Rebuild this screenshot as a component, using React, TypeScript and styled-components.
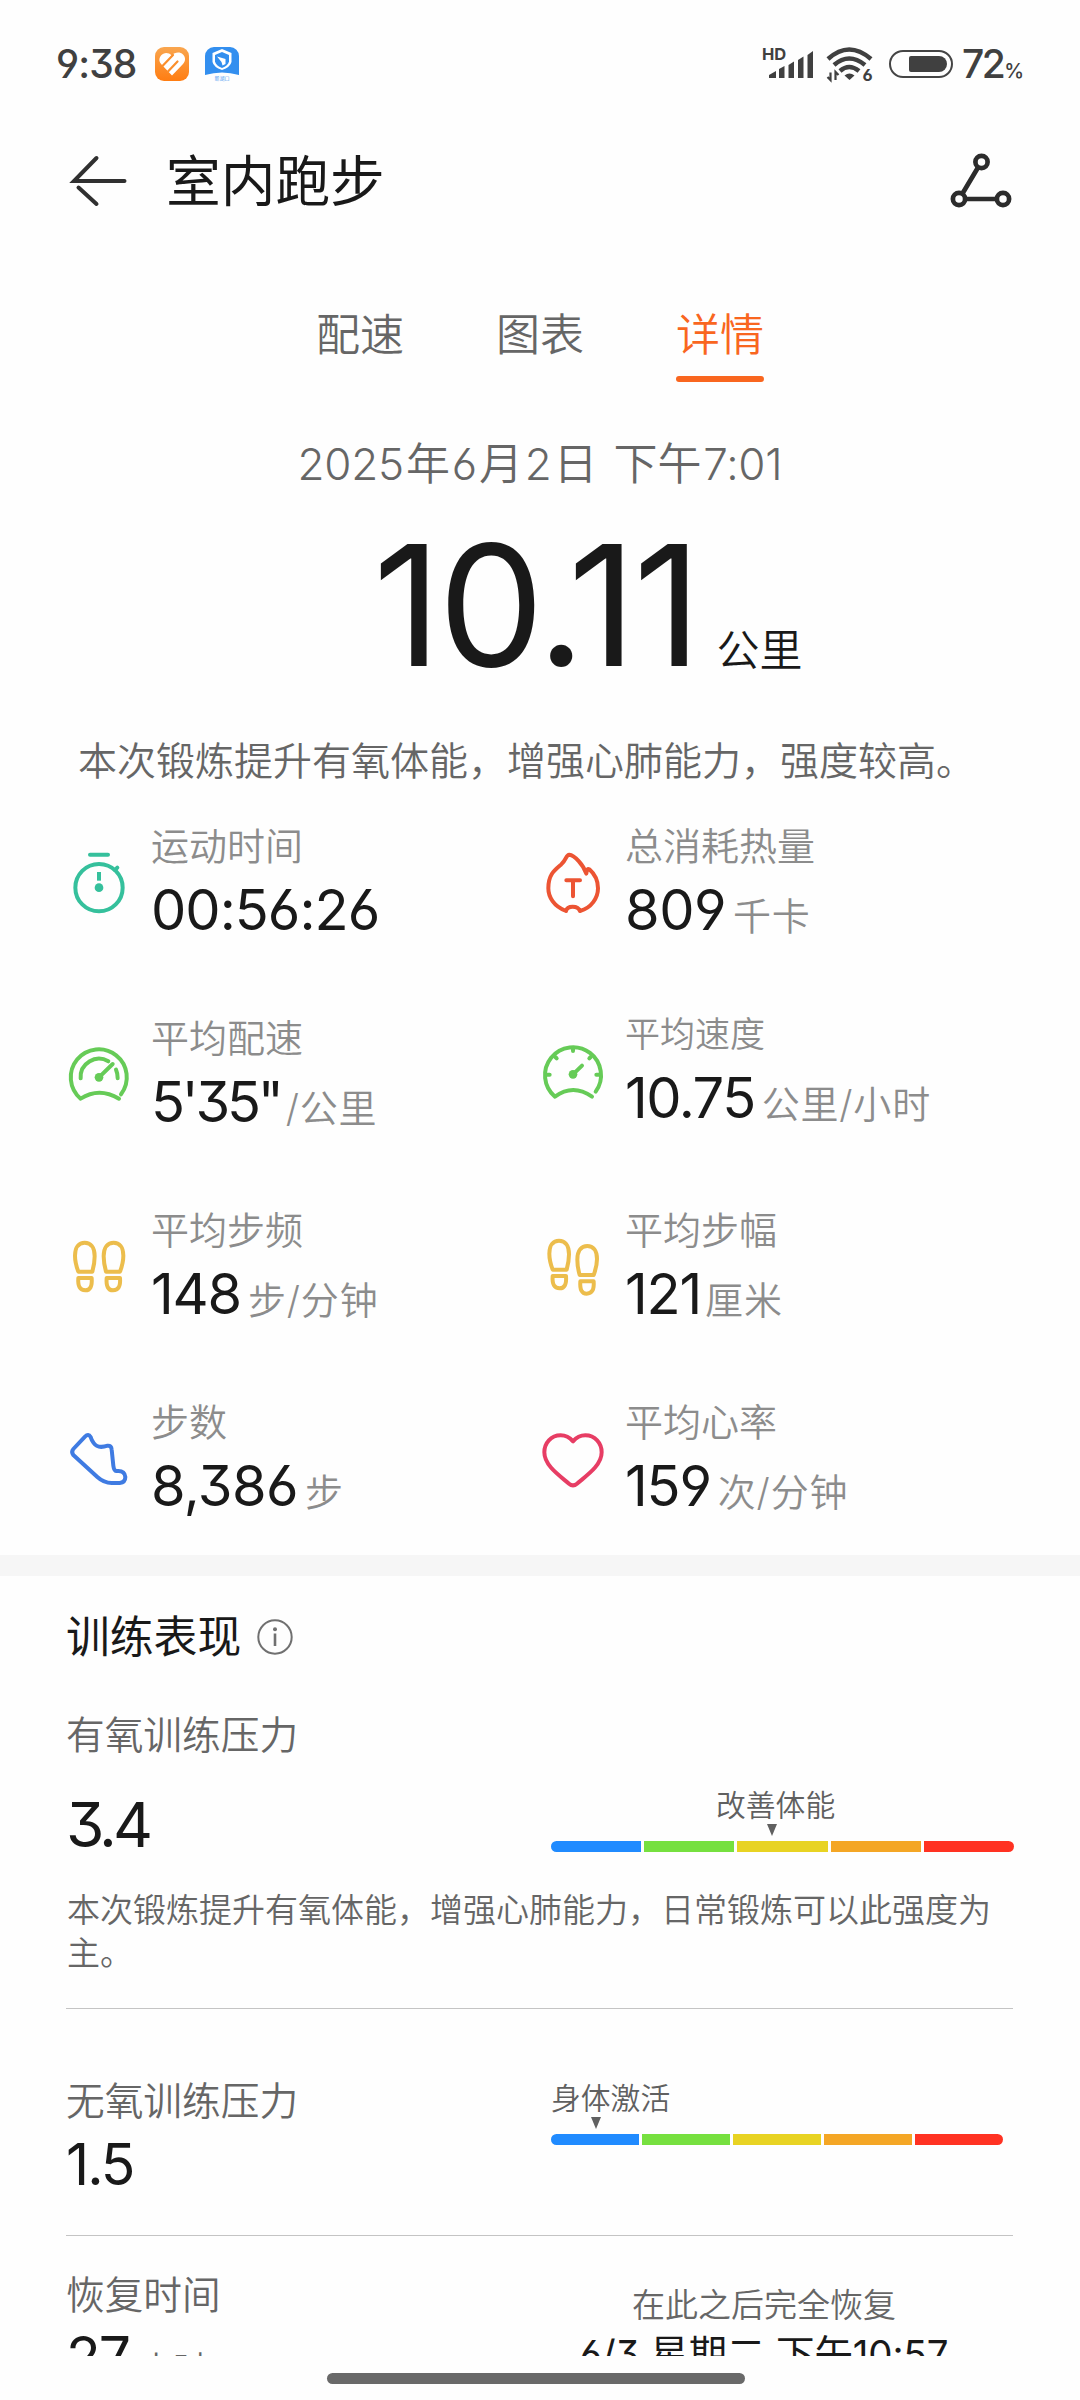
import React from "react";
import styled, { createGlobalStyle } from "styled-components";

const GlobalStyle = createGlobalStyle`
  html, body { margin: 0; padding: 0; background: #fefefe; }
  *, *::before, *::after { box-sizing: border-box; }
  svg { display: block; flex: none; overflow: visible; }
`;

const Screen = styled.div`
  width: 1080px;
  height: 2400px;
  display: flex;
  flex-direction: column;
  overflow: hidden;
  background: #fefefe;
  color: #191919;
  font-family: Inter, "Noto Sans CJK SC", sans-serif;
  font-feature-settings: "cv03", "cv04", "cv09";
  font-weight: 350;
  white-space: nowrap;
`;

/* ---------- status bar ---------- */

const StatusBar = styled.header`
  flex: none;
  height: 128px;
  padding-left: 56px;
  display: flex;
  align-items: center;
  color: #404040;
`;

const Clock = styled.span`
  width: 99px;
  font-size: 39px;
  line-height: 48px;
  font-weight: 450;
  letter-spacing: -0.9px;
`;

const AppBadges = styled.div`
  display: flex;
  gap: 16px;
`;

const StatusRight = styled.div`
  width: 317px;
  margin-left: auto;
  display: flex;
  align-items: center;

  > svg:first-child { margin-right: 11px; }
`;

const Battery = styled.div`
  width: 64px;
  height: 28px;
  margin: 0 9px 0 16px;
  padding: 4px 4px 4px 18px;
  border: 2px solid #454545;
  border-radius: 14px;
`;

const BatteryFill = styled.div`
  height: 16px;
  border-radius: 2px 8px 8px 2px;
  background: #404040;
`;

const BatteryLevel = styled.span`
  font-size: 39px;
  line-height: 48px;
  font-weight: 450;
  letter-spacing: -2.6px;
`;

const Percent = styled.span`
  margin-left: 1px;
  font-size: 20px;
  line-height: 1;
  letter-spacing: 0;
`;

/* ---------- header and tabs ---------- */

const Header = styled.div`
  flex: none;
  height: 104px;
  padding: 0 67px 0 69px;
  display: flex;
  align-items: center;
`;

const Title = styled.h1`
  margin: 0 auto 0 37px;
  padding-top: 2px;
  font-size: 54.7px;
  line-height: 80px;
  font-weight: 400;
`;

const Tabs = styled.nav`
  margin-top: 69px;
  display: flex;
  justify-content: center;
  gap: 92px;
`;

const Tab = styled.button<{ $active?: boolean }>`
  padding: 0;
  border: 0;
  background: none;
  font: inherit;
  font-size: 44px;
  line-height: 68px;
  color: ${(p) => (p.$active ? "#f9661f" : "#666")};

  &::after {
    content: "";
    display: block;
    height: 6px;
    margin-top: 7px;
    border-radius: 3px;
    background: ${(p) => (p.$active ? "#f9661f" : "transparent")};
  }
`;

const Content = styled.main`
  flex: 1;
  min-height: 0;
  overflow: hidden;
`;

/* ---------- summary ---------- */

const DateLine = styled.div`
  margin-top: 50px;
  text-align: center;
  font-size: 44px;
  line-height: 65px;
  letter-spacing: -0.2px;
  color: #666;
`;

const DateUnit = styled.span`
  padding: 0 2px;
`;

const Distance = styled.div`
  height: 170px;
  margin-top: 23px;
  padding-left: 373px;
  display: flex;
  align-items: baseline;
  line-height: 170px;
`;

const DistanceValue = styled.span`
  font-size: 168px;
  font-weight: 400;
  letter-spacing: -3px;
`;

const DistanceUnit = styled.span`
  margin-left: 18px;
  font-size: 43px;
  line-height: 1;
`;

const Summary = styled.p`
  margin: 48px 0 0 78px;
  font-size: 39px;
  line-height: 46px;
  color: #666;
`;

/* ---------- statistics ---------- */

const StatGrid = styled.div`
  display: grid;
  grid-template-columns: 474px 1fr;
  grid-auto-rows: 192px;
  padding-left: 59px;
`;

const Stat = styled.div<{ $compact?: boolean }>`
  display: flex;
  gap: 12px;
  margin-top: ${(p) => (p.$compact ? -4 : 0)}px;

  > svg { margin-top: 59px; }
`;

const StatText = styled.div`
  padding-top: 37px;
`;

const StatLabel = styled.div<{ $compact?: boolean }>`
  font-size: ${(p) => (p.$compact ? 35 : 38)}px;
  line-height: 50px;
  color: #8c8c8c;
`;

const StatValue = styled.div`
  margin-top: 9px;
  font-size: 56px;
  line-height: 60px;
`;

const StatNumber = styled.span<{ $spacing?: number }>`
  font-weight: 400;
  letter-spacing: ${(p) => p.$spacing ?? -1.2}px;
`;

const StatUnit = styled.span<{ $gap?: number }>`
  margin-left: ${(p) => p.$gap ?? 7}px;
  font-size: 38px;
  line-height: 1;
  letter-spacing: 0.8px;
  color: #8c8c8c;
`;

const Band = styled.div`
  height: 21px;
  margin-top: 3px;
  background: #f6f6f6;
`;

/* ---------- training performance ---------- */

const Training = styled.section`
  padding: 29px 67px 0 66px;
`;

const SectionTitle = styled.h2`
  margin: 0;
  display: flex;
  align-items: center;
  gap: 16px;
  font-size: 43.8px;
  line-height: 66px;
  font-weight: 400;

  > svg { margin-bottom: 2px; }
`;

const MetricLabel = styled.div`
  font-size: 38.7px;
  line-height: 47px;
  color: #666;
`;

const MetricRow = styled.div<{ $top: number }>`
  margin-top: ${(p) => p.$top}px;
  display: grid;
  grid-template-columns: 485px 1fr;
`;

const MetricValue = styled.div<{ $size: number; $top: number; $spacing?: number }>`
  margin-top: ${(p) => p.$top}px;
  font-size: ${(p) => p.$size}px;
  line-height: 60px;
  font-weight: 400;
  letter-spacing: ${(p) => p.$spacing ?? -2}px;
`;

const MetricUnit = styled.span`
  margin-left: 10px;
  font-size: 34px;
  line-height: 1;
  letter-spacing: 0;
  font-weight: 350;
  vertical-align: -3px;
  color: #666;
`;

const Gauge = styled.div<{ $width: number; $top?: number }>`
  width: ${(p) => p.$width}px;
  margin-top: ${(p) => p.$top ?? 0}px;
`;

const GaugeLabel = styled.div<{ $indent: number }>`
  padding-left: ${(p) => p.$indent}px;
  font-size: 29.8px;
  line-height: 36px;
  color: #606060;
`;

const Pointer = styled.div<{ $offset: number }>`
  width: 0;
  margin: 1px 0 5px ${(p) => p.$offset}px;
  border: 5.5px solid transparent;
  border-top: 12px solid #606060;
  border-bottom: 0;
`;

const Segments = styled.div`
  display: flex;
  gap: 3px;
  height: 11px;
  border-radius: 5.5px;
  overflow: hidden;
`;

const Segment = styled.div<{ $color: string }>`
  flex: 1;
  background: ${(p) => p.$color};
`;

const Note = styled.p`
  margin: 34px 0 0 1px;
  font-size: 33px;
  line-height: 43px;
  white-space: normal;
  word-break: break-all;
  color: #666;
`;

const Divider = styled.hr<{ $top: number }>`
  height: 1px;
  margin: ${(p) => p.$top}px 0 0;
  border: 0;
  background: #c4c4c4;
`;

const Recovery = styled.div`
  width: 426px;
  padding-top: 12px;
  text-align: center;
`;

const RecoveryLabel = styled.div`
  font-size: 33px;
  line-height: 42px;
  color: #666;
`;

const RecoveryTime = styled.div`
  margin-top: 6px;
  font-size: 38.5px;
  font-weight: 400;
  line-height: 44px;
  letter-spacing: -0.1px;
`;

const NavBar = styled.footer`
  flex: none;
  height: 44px;
  padding: 17px 0 0 327px;
`;

const HomeIndicator = styled.div`
  width: 418px;
  height: 11px;
  border-radius: 6px;
  background: #696969;
`;

/* ---------- icons ---------- */

const HealthBadge = () => (
  <svg width="34" height="34" viewBox="0 0 34 34">
    <defs>
      <linearGradient id="health" x1="0" y1="0" x2="0" y2="1">
        <stop offset="0" stopColor="#f9a64f" />
        <stop offset="1" stopColor="#ff7d12" />
      </linearGradient>
    </defs>
    <rect width="34" height="34" rx="9" fill="url(#health)" />
    <path d="M16.500 8.500c-3-3.500-8-3-10.500 0c-2.500 3.500-2 6.500 1 9.500l10 10.500l11-11.500c3-3 2.500-7 0-9.500c-3-2.800-8-2.500-11.500 1z" fill="#fff" />
    <path d="M7 19.500L18 8M13 24.500L22.500 14.500" stroke="#fb8f2c" strokeWidth="2.200" strokeLinecap="round" />
  </svg>
);

const ShieldBadge = () => (
  <svg width="34" height="34" viewBox="0 0 34 34">
    <path d="M0 9a9 9 0 0 1 9-9h16a9 9 0 0 1 9 9v19q-17-5-34 0z" fill="#338fef" />
    <path d="M17 2l9.500 4v9q-1 5-9.500 8q-8.500-3-9.500-8v-9z" fill="#fff" />
    <path d="M17 5l7 3v6.500q-1 4-7 6.500q-6-2.500-7-6.500v-6.500z" fill="#338fef" />
    <path d="M12 9.500l8.500 2.500v5l-3 1.500l-1-3.500z" fill="#fff" />
    <text x="17" y="33" fontSize="5" textAnchor="middle" fill="#338fef">新湖口</text>
  </svg>
);

const SignalIcon = () => (
  <svg width="52" height="34" viewBox="0 0 52 34">
    <text x="-1" y="13" fontSize="16.500" fontWeight="700" fill="#404040">HD</text>
    <g fill="#404040">
      <path d="M6 31v-3l7-4v7z" />
      <path d="M16 31v-9l5.500-3v12z" />
      <path d="M25.500 31v-13l5.500-3.500v16.500z" />
      <path d="M35 31v-18l5.500-3.500v21.500z" />
      <path d="M44.500 31v-23l5.500-4v27z" />
    </g>
  </svg>
);

const WifiIcon = () => (
  <svg width="47" height="36" viewBox="0 0 47 36">
    <g fill="none" stroke="#404040" strokeWidth="4.500">
      <path d="M2 13q21-19 43 0" />
      <path d="M8 19q15-13 31 0" />
      <path d="M14 25q9-8 19 0" />
    </g>
    <path d="M23.500 34l-5-4.500q5-4 10 0z" fill="#404040" />
    <path d="M4.500 26.500v7.500l-3-3M9.500 34v-8l3 3" fill="none" stroke="#404040" strokeWidth="2.200" />
    <text x="36.500" y="34.500" fontSize="16.500" fontWeight="700" fill="#404040">6</text>
  </svg>
);

const BackIcon = () => (
  <svg width="60" height="60" viewBox="0 0 60 60" fill="none" stroke="#303030" strokeWidth="4" strokeLinecap="round">
    <path d="M27.500 8L5 31H55.500M9.500 37.500L27.500 54" />
  </svg>
);

const RouteIcon = () => (
  <svg width="62" height="56" viewBox="0 0 62 56" fill="none" stroke="#2c2c2c">
    <g strokeWidth="4.700">
      <circle cx="30.500" cy="10" r="6.100" />
      <circle cx="8" cy="47" r="6.100" />
      <circle cx="52" cy="47" r="6.100" />
      <path d="M27 15.500L11.500 41.500M14.500 47H46" />
    </g>
  </svg>
);

const InfoIcon = () => (
  <svg width="36" height="36" viewBox="0 0 36 36">
    <circle cx="18" cy="18" r="16.700" fill="none" stroke="#707070" strokeWidth="2" />
    <circle cx="18" cy="10.200" r="2" fill="#707070" />
    <path d="M18 14.500V27" stroke="#707070" strokeWidth="2.600" />
  </svg>
);

const StatSvg = styled.svg.attrs({
  width: 80,
  height: 80,
  viewBox: "0 0 240 240",
  strokeLinecap: "round",
  strokeLinejoin: "round",
  strokeWidth: 12,
})<{ $color: string }>`
  fill: none;
  stroke: ${(p) => p.$color};
  --tint: ${(p) => p.$color};
`;

const Dot = styled.circle`
  fill: var(--tint);
  stroke: none;
`;

const TimerIcon = () => (
  <StatSvg $color="#35c09c">
    <circle cx="120" cy="134" r="71" />
    <path d="M93 35H147M168 81L175 74" />
    <path d="M120 87V113" strokeLinecap="butt" />
    <Dot cx="120" cy="134" r="13" />
  </StatSvg>
);

const CalorieIcon = () => (
  <StatSvg $color="#ec5433">
    <path d="M99 204C62 190 46 162 46 136C46 95 64 82 84 65C102 48 98 36 109 35C124 36 152 66 160 92C161 80 164 77 169 79C186 94 195 115 195 136C195 165 175 195 141 204C138 195 130 191 119 191C108 191 101 195 99 204Z" />
    <path d="M100 112H141M120 112V160" />
  </StatSvg>
);

const PaceIcon = () => (
  <StatSvg $color="#66cb57">
    <path d="M186 178A84 84 0 1 0 65 191Q120 155 180 191" />
    <path d="M65 130A55 55 0 0 1 148 79M171 104Q176 115 176 130" />
    <path d="M120 127L161 87" />
    <Dot cx="120" cy="127" r="13" />
  </StatSvg>
);

const SpeedIcon = () => (
  <StatSvg $color="#66cb57">
    <path d="M188 182A84 84 0 1 0 66 197Q120 157 177 197" />
    <path d="M120 52V60M42 131H50M190 131H198M67 78L71 82M173 78L169 82" />
    <path d="M120 130L147 104" />
    <Dot cx="120" cy="130" r="13" />
  </StatSvg>
);

const Sole = () => (
  <>
    <path d="M58 134C52 118 48 100 48 86C48 60 60 47 77 47C94 47 107 60 107 88C107 106 104 120 100 134Z" />
    <path d="M58 153H98Q101 190 79 190Q55 190 58 153Z" />
  </>
);

const CadenceIcon = () => (
  <StatSvg $color="#ecbd4c">
    <Sole />
    <g transform="translate(241 0) scale(-1 1)"><Sole /></g>
  </StatSvg>
);

const StrideIcon = () => (
  <StatSvg $color="#ecbd4c">
    <g transform="translate(1 -6)"><Sole /></g>
    <g transform="translate(240 10) scale(-1 1)"><Sole /></g>
  </StatSvg>
);

const ShoeIcon = () => (
  <StatSvg $color="#3f7be2">
    <path d="M78 53L43 90Q36 98 43 108L115 174Q135 192 158 192L182 192Q199 190 199 174Q197 156 178 156L173 156Q165 156 163 140L158 92Q157 79 146 80Q116 90 104 72Q98 65 95 54Q88 43 78 53Z" />
  </StatSvg>
);

const HeartIcon = () => (
  <StatSvg $color="#e73d64">
    <path d="M120 67C108 53 98 49 83 49C54 49 34 72 34 100C34 140 80 170 108 194Q120 204 132 194C160 170 206 140 206 100C206 72 186 49 157 49C142 49 132 53 120 67Z" />
  </StatSvg>
);

/* ---------- data ---------- */

type StatItem = {
  icon: React.ComponentType;
  label: string;
  value: string;
  unit?: string;
  spacing?: number;
  unitGap?: number;
  compact?: boolean;
};

const stats: StatItem[] = [
  { icon: TimerIcon, label: "运动时间", value: "00:56:26", spacing: -1 },
  { icon: CalorieIcon, label: "总消耗热量", value: "809", unit: "千卡", spacing: -0.5 },
  { icon: PaceIcon, label: "平均配速", value: "5'35\"", unit: "/公里", spacing: -3.2, unitGap: 5 },
  { icon: SpeedIcon, label: "平均速度", value: "10.75", unit: "公里/小时", spacing: -1.5, compact: true },
  { icon: CadenceIcon, label: "平均步频", value: "148", unit: "步/分钟" },
  { icon: StrideIcon, label: "平均步幅", value: "121", unit: "厘米", unitGap: 4 },
  { icon: ShoeIcon, label: "步数", value: "8,386", unit: "步", spacing: -0.6 },
  { icon: HeartIcon, label: "平均心率", value: "159", unit: "次/分钟" },
];

const zoneColors = ["#208bff", "#76e03f", "#e8d323", "#f4a625", "#ff3222"];

const ZoneGauge = (props: { label: string; indent: number; pointer: number; width: number; top?: number }) => (
  <Gauge $width={props.width} $top={props.top}>
    <GaugeLabel $indent={props.indent}>{props.label}</GaugeLabel>
    <Pointer $offset={props.pointer} />
    <Segments>
      {zoneColors.map((c) => (
        <Segment key={c} $color={c} />
      ))}
    </Segments>
  </Gauge>
);

export default function App() {
  return (
    <Screen lang="zh-CN">
      <GlobalStyle />
      <StatusBar>
        <Clock>9:38</Clock>
        <AppBadges>
          <HealthBadge />
          <ShieldBadge />
        </AppBadges>
        <StatusRight>
          <SignalIcon />
          <WifiIcon />
          <Battery>
            <BatteryFill />
          </Battery>
          <BatteryLevel>
            72<Percent>%</Percent>
          </BatteryLevel>
        </StatusRight>
      </StatusBar>
      <Header>
        <BackIcon />
        <Title>室内跑步</Title>
        <RouteIcon />
      </Header>
      <Tabs>
        <Tab>配速</Tab>
        <Tab>图表</Tab>
        <Tab $active>详情</Tab>
      </Tabs>
      <Content>
        <DateLine>
          2025<DateUnit>年</DateUnit>6<DateUnit>月</DateUnit>2<DateUnit>日</DateUnit> <DateUnit>下午</DateUnit>7:01
        </DateLine>
        <Distance>
          <DistanceValue>10.11</DistanceValue>
          <DistanceUnit>公里</DistanceUnit>
        </Distance>
        <Summary>本次锻炼提升有氧体能，增强心肺能力，强度较高。</Summary>
        <StatGrid>
          {stats.map(({ icon: Icon, ...s }) => (
            <Stat key={s.label} $compact={s.compact}>
              <Icon />
              <StatText>
                <StatLabel $compact={s.compact}>{s.label}</StatLabel>
                <StatValue>
                  <StatNumber $spacing={s.spacing}>{s.value}</StatNumber>
                  {s.unit && <StatUnit $gap={s.unitGap}>{s.unit}</StatUnit>}
                </StatValue>
              </StatText>
            </Stat>
          ))}
        </StatGrid>
        <Band />
        <Training>
          <SectionTitle>
            训练表现
            <InfoIcon />
          </SectionTitle>
          <MetricRow $top={41}>
            <MetricLabel>有氧训练压力</MetricLabel>
          </MetricRow>
          <MetricRow $top={28}>
            <MetricValue $size={62} $top={8} $spacing={-4}>3.4</MetricValue>
            <ZoneGauge label="改善体能" indent={165} pointer={216} width={463} />
          </MetricRow>
          <Note>本次锻炼提升有氧体能，增强心肺能力，日常锻炼可以此强度为主。</Note>
          <Divider $top={33} />
          <MetricRow $top={69}>
            <div>
              <MetricLabel>无氧训练压力</MetricLabel>
              <MetricValue $size={57} $top={10}>1.5</MetricValue>
            </div>
            <ZoneGauge label="身体激活" indent={0} pointer={40} width={452} top={2} />
          </MetricRow>
          <Divider $top={40} />
          <MetricRow $top={36}>
            <div>
              <MetricLabel>恢复时间</MetricLabel>
              <MetricValue $size={57} $top={9}>
                27<MetricUnit>小时</MetricUnit>
              </MetricValue>
            </div>
            <Recovery>
              <RecoveryLabel>在此之后完全恢复</RecoveryLabel>
              <RecoveryTime>6/3 星期二 下午10:57</RecoveryTime>
            </Recovery>
          </MetricRow>
        </Training>
      </Content>
      <NavBar>
        <HomeIndicator />
      </NavBar>
    </Screen>
  );
}
